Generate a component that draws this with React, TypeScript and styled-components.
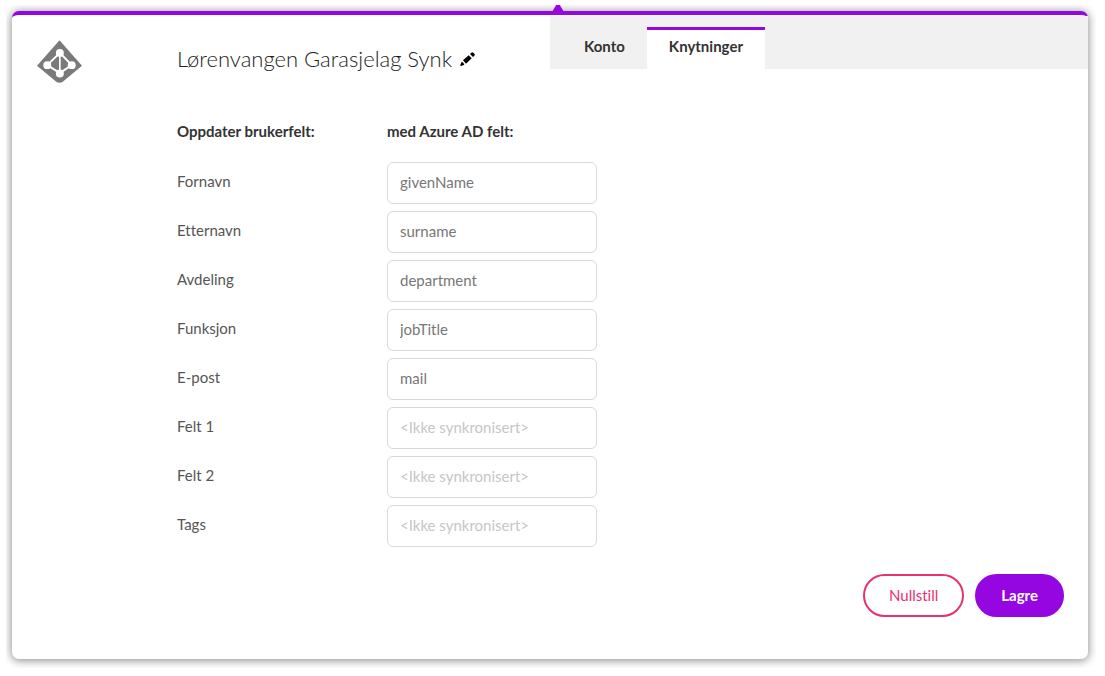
import React, { useState } from "react";
import styled, { createGlobalStyle } from "styled-components";

const purple = "#9606e0";
const pink = "#e8326f";

const GlobalStyle = createGlobalStyle`
  *, *::before, *::after { box-sizing: border-box; }
  body {
    margin: 0;
    background: #fff;
    color: #333;
    font-family: Lato, "Open Sans", sans-serif;
    font-size: 15px;
    line-height: 20px;
    font-variant-ligatures: none;
  }
  button, input { font: inherit; font-variant-ligatures: none; }
`;

const Frame = styled.div`
  margin: 5px 9px 8px 6px;
  padding: 6px 8px 9px 6px;
  overflow: hidden;
`;

const Card = styled.main`
  position: relative;
  border-top: 4px solid ${purple};
  border-radius: 7px;
  background: #fff;
  box-shadow: 0 1px 8px 1px rgba(0, 0, 0, 0.42);
`;

const Pointer = styled.span`
  position: absolute;
  top: -10px;
  left: 50%;
  width: 12px;
  height: 7px;
  margin-left: 2px;
  background: ${purple};
  clip-path: polygon(35% 0, 65% 0, 100% 100%, 0 100%);
`;

const Header = styled.header`
  display: grid;
  grid-template-columns: 1fr 1fr;
  align-items: start;
  padding-top: 1px;
`;

const Identity = styled.div`
  display: flex;
  align-items: flex-start;
  padding: 24px 0 0 25px;
`;

const Logo = styled.svg`
  width: 45px;
  height: 43px;
  margin-right: 95px;
`;

const Title = styled.h1`
  margin: 0;
  color: #222;
  font-size: 22px;
  font-weight: 300;
  line-height: 38px;
  white-space: nowrap;
`;

const EditButton = styled.button`
  display: flex;
  align-items: center;
  height: 38px;
  margin-left: 8px;
  padding: 0;
  border: 0;
  background: none;
  color: #000;
  cursor: pointer;
`;

const Tabs = styled.nav`
  display: flex;
  align-items: flex-end;
  height: 53px;
  background: #f1f1f1;
`;

const Tab = styled.button<{ $active: boolean }>`
  height: 42px;
  padding: 0 22px 7px;
  border: 0;
  border-top: 3px solid ${(p) => (p.$active ? purple : "transparent")};
  background: ${(p) => (p.$active ? "#fff" : "transparent")};
  color: #333;
  font-weight: 700;
  cursor: pointer;
  &:first-child {
    padding-left: 34px;
  }
`;

const Form = styled.form`
  padding: 38px 24px 42px 165px;
`;

const Row = styled.div`
  display: grid;
  grid-template-columns: 210px 210px;
  margin-bottom: 7px;
`;

const Headings = styled(Row)`
  margin-bottom: 21px;
  color: #333;
  font-weight: 700;
`;

const Label = styled.label`
  line-height: 38px;
  color: #555;
`;

const Field = styled.input`
  width: 100%;
  height: 42px;
  padding: 0 12px 2px;
  border: 1px solid #d9d9d9;
  border-radius: 6px;
  background: #fff;
  color: #777;
  &::placeholder {
    color: #c6c6c6;
    opacity: 1;
  }
`;

const Actions = styled.div`
  display: flex;
  justify-content: flex-end;
  gap: 11px;
  margin-top: 27px;
`;

const Action = styled.button<{ $primary?: boolean }>`
  height: 43px;
  padding: 0 24px 2px;
  border: ${(p) => (p.$primary ? purple : pink)} solid 2px;
  border-radius: 22px;
  background: ${(p) => (p.$primary ? purple : "#fff")};
  color: ${(p) => (p.$primary ? "#fff" : pink)};
  font-weight: ${(p) => (p.$primary ? 700 : 400)};
  cursor: pointer;
`;

const fields = [
  { id: "fornavn", label: "Fornavn", value: "givenName" },
  { id: "etternavn", label: "Etternavn", value: "surname" },
  { id: "avdeling", label: "Avdeling", value: "department" },
  { id: "funksjon", label: "Funksjon", value: "jobTitle" },
  { id: "epost", label: "E-post", value: "mail" },
  { id: "felt1", label: "Felt 1", value: "" },
  { id: "felt2", label: "Felt 2", value: "" },
  { id: "tags", label: "Tags", value: "" },
];

const DirectoryLogo = () => (
  <Logo viewBox="0 0 136 128" aria-hidden="true">
    <path d="M68 0 136 77 76 127Q68 130 60 127L0 77Z" fill="#7a7a7a" />
    <path d="M69 38 31 75 69 99 105 75Z" fill="#7a7a7a" stroke="#fff" strokeWidth="6" />
    <path d="M69 38V98" stroke="#fff" strokeWidth="5" />
    <g fill="#fff">
      <circle cx="69" cy="38" r="12" />
      <circle cx="31" cy="75" r="12" />
      <circle cx="105" cy="75" r="12" />
      <circle cx="69" cy="100" r="12" />
    </g>
  </Logo>
);

const Pencil = () => (
  <svg width="15" height="15" viewBox="0 0 45 45" fill="currentColor" aria-hidden="true">
    <path d="M9 25 26 10 35 19 18 35Z" />
    <path d="M30 6 34 2Q37-1 40 2L43 5Q46 8 43 11L39 15Z" />
    <path d="M5 29Q11 31 13 38L3 42Q0 42 1 39Z" />
  </svg>
);

export default function App() {
  const [active, setActive] = useState("Knytninger");
  return (
    <>
      <GlobalStyle />
      <Frame>
        <Card>
          <Pointer />
          <Header>
            <Identity>
              <DirectoryLogo />
              <Title>Lørenvangen Garasjelag Synk</Title>
              <EditButton aria-label="Rediger navn">
                <Pencil />
              </EditButton>
            </Identity>
            <Tabs>
              {["Konto", "Knytninger"].map((name) => (
                <Tab key={name} $active={active === name} onClick={() => setActive(name)}>
                  {name}
                </Tab>
              ))}
            </Tabs>
          </Header>
          <Form onSubmit={(e) => e.preventDefault()}>
            <Headings>
              <span>Oppdater brukerfelt:</span>
              <span>med Azure AD felt:</span>
            </Headings>
            {fields.map((f) => (
              <Row key={f.id}>
                <Label htmlFor={f.id}>{f.label}</Label>
                <Field id={f.id} defaultValue={f.value} placeholder="<Ikke synkronisert>" />
              </Row>
            ))}
            <Actions>
              <Action type="reset">Nullstill</Action>
              <Action type="submit" $primary>
                Lagre
              </Action>
            </Actions>
          </Form>
        </Card>
      </Frame>
    </>
  );
}
